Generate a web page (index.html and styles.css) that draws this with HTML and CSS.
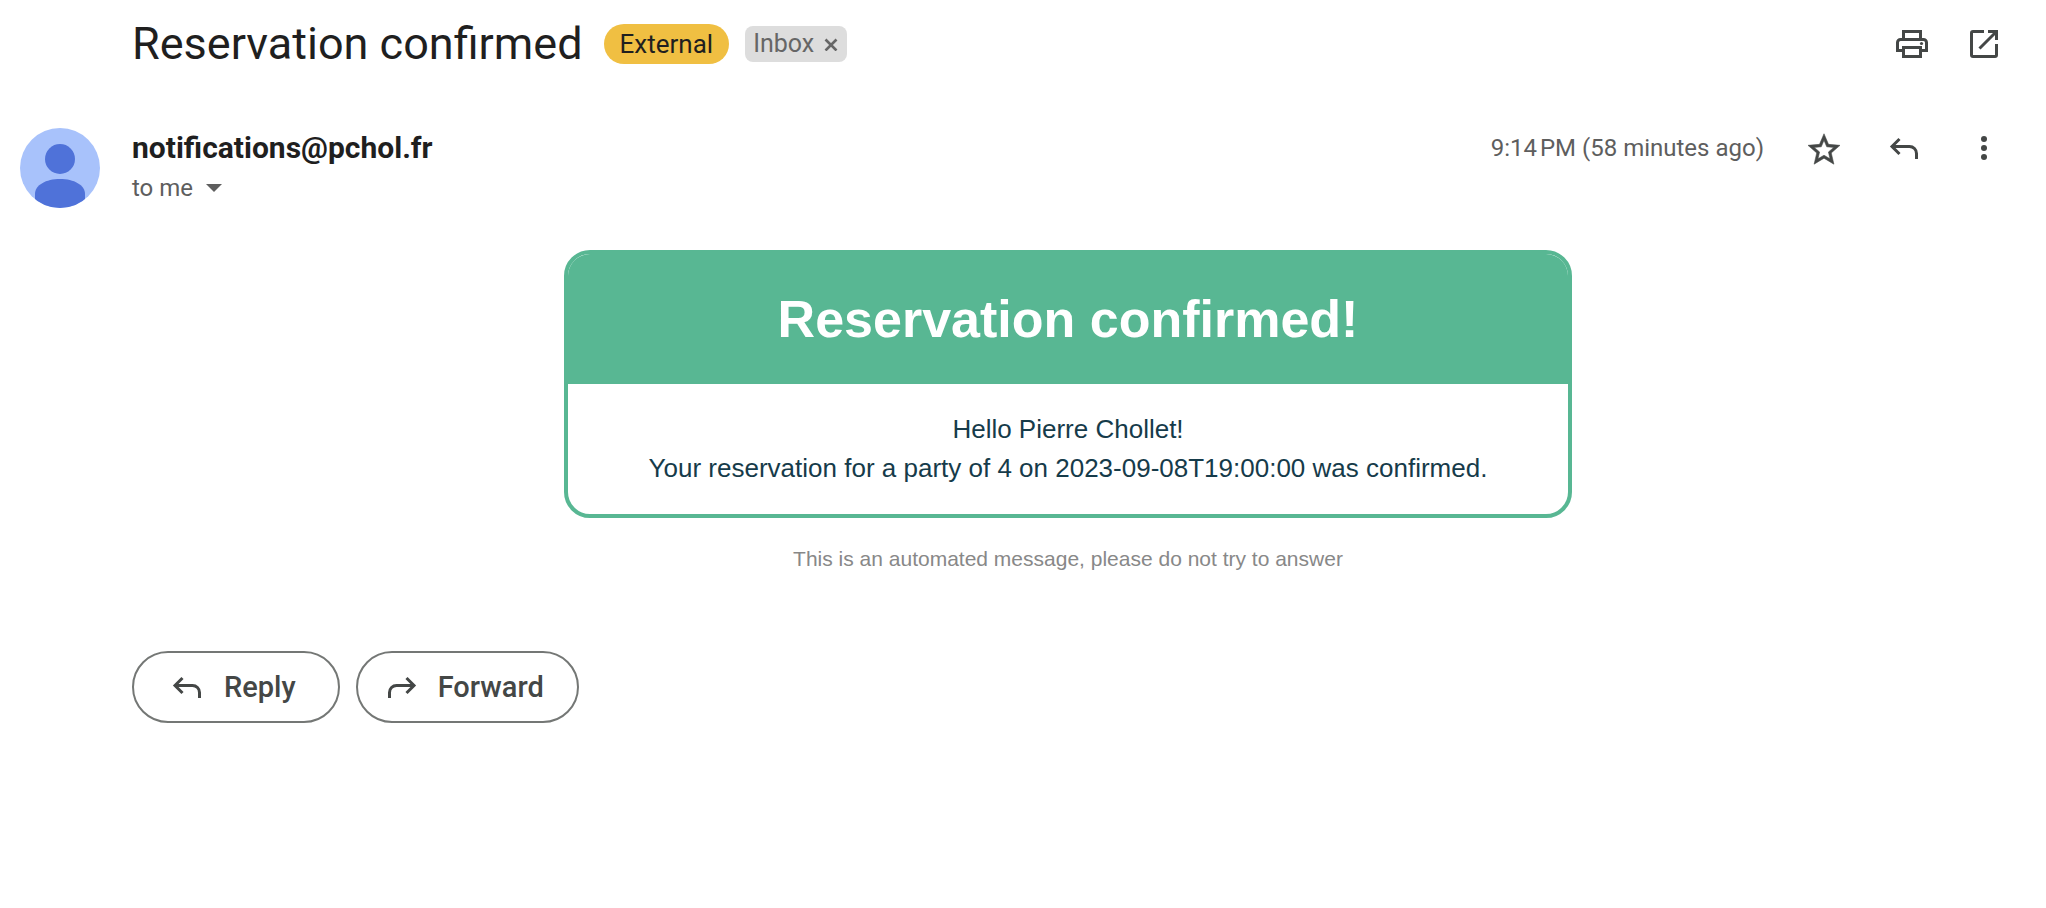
FILE: index.html
```html
<!DOCTYPE html>
<html lang="en">
<head>
<meta charset="utf-8">
<meta name="viewport" content="width=device-width, initial-scale=1">
<title>Reservation confirmed</title>
<link rel="stylesheet" href="styles.css">
</head>
<body>
<main class="mail">
  <header class="subject-row">
    <h1 class="subject">Reservation confirmed</h1>
    <span class="badge-external">External</span>
    <span class="label-inbox">Inbox
      <button class="label-remove" type="button" aria-label="Remove label Inbox">
        <svg width="14" height="14" viewBox="0 0 14 14"><path d="M1.500 2.500l11 11M12.500 2.500l-11 11" fill="none" stroke="currentColor" stroke-width="2.600"/></svg>
      </button>
    </span>
    <div class="subject-actions">
      <button class="icon-button" type="button" aria-label="Print all">
        <svg width="40" height="40" viewBox="0 0 40 40" fill="none" stroke="currentColor" stroke-width="3"><path d="M11.500 15V7.500h17V15M11.500 26.500h-6V18.500a3 3 0 0 1 3-3h23a3 3 0 0 1 3 3v8h-6"/><path d="M11.500 23.500h17v9h-17z"/><circle cx="29.500" cy="19.500" r="1.600" fill="currentColor" stroke="none"/></svg>
      </button>
      <button class="icon-button" type="button" aria-label="In new window">
        <svg width="40" height="40" viewBox="0 0 40 40" fill="none" stroke="currentColor" stroke-width="3"><path d="M20 7.500H9a1.500 1.500 0 0 0-1.500 1.500v22a1.500 1.500 0 0 0 1.500 1.500h22a1.500 1.500 0 0 0 1.500-1.500V20M24 7.500h8.500V16M32 8L15.500 24.500"/></svg>
      </button>
    </div>
  </header>

  <section class="sender-row">
    <svg class="avatar" viewBox="0 0 80 80" role="img" aria-label="Sender">
      <defs><clipPath id="disc"><circle cx="40" cy="40" r="40"/></clipPath></defs>
      <g clip-path="url(#disc)"><rect width="80" height="80" fill="#a8c2fb"/><circle cx="40" cy="31" r="15" fill="#4f72d9"/><path d="M15 80V66c0-9 11-15 25-15s25 6 25 15v14z" fill="#4f72d9"/></g>
    </svg>
    <div class="sender">
      <h2 class="sender-name">notifications@pchol.fr</h2>
      <button class="recipient" type="button">to me
        <svg width="16" height="8" viewBox="0 0 16 8"><path d="M0 0h16L8 8z" fill="currentColor"/></svg>
      </button>
    </div>
    <div class="sender-actions">
      <time class="sent-at">9:14&#8239;PM (58 minutes ago)</time>
      <button class="icon-button" type="button" aria-label="Star">
        <svg width="40" height="40" viewBox="0 0 40 40"><path fill="currentColor" stroke="currentColor" stroke-width=".350" transform="scale(1.6) translate(.5 1.6)" d="M22 9.240l-7.190-.620L12 2 9.190 8.630 2 9.240l5.460 4.730L5.820 21 12 17.270 18.180 21l-1.630-7.030L22 9.240zM12 15.400l-3.760 2.270 1-4.280-3.320-2.880 4.380-.380L12 6.100l1.710 4.040 4.380.380-3.320 2.880 1 4.280L12 15.400z"/></svg>
      </button>
      <button class="icon-button" type="button" aria-label="Reply">
        <svg width="40" height="40" viewBox="0 0 40 40"><path fill="none" stroke="currentColor" stroke-width="3" d="M15.500 11L8 18.500l7.500 7.500M8 18.500h17.500a7 7 0 0 1 7 7V31"/></svg>
      </button>
      <button class="icon-button" type="button" aria-label="More">
        <svg width="40" height="40" viewBox="0 0 40 40" fill="currentColor"><circle cx="20" cy="11" r="3"/><circle cx="20" cy="20" r="3"/><circle cx="20" cy="29" r="3"/></svg>
      </button>
    </div>
  </section>

  <article class="message">
    <div class="card">
      <h3 class="card-title">Reservation confirmed!</h3>
      <p class="card-body">Hello Pierre Chollet!<br>Your reservation for a party of 4 on 2023-09-08T19:00:00 was confirmed.</p>
    </div>
    <p class="note">This is an automated message, please do not try to answer</p>
  </article>

  <footer class="reply-row">
    <button class="pill-button" type="button">
      <svg width="32" height="32" viewBox="0 0 32 32"><path fill="none" stroke="currentColor" stroke-width="3" d="M10.500 7L3 14.500l7.500 7.500M3 14.500h17.500a7 7 0 0 1 7 7V27"/></svg>
      Reply
    </button>
    <button class="pill-button pill-forward" type="button">
      <svg width="32" height="32" viewBox="0 0 32 32"><path fill="none" stroke="currentColor" stroke-width="3" d="M20.500 7L28 14.500l-7.500 7.500M28 14.500H10.500a7 7 0 0 0-7 7V27"/></svg>
      Forward
    </button>
  </footer>
</main>
</body>
</html>
```
FILE: styles.css
```css
* {
  box-sizing: border-box;
}

body {
  margin: 0;
  background: #fff;
  color: #1f1f1f;
  font-family: Roboto, "Open Sans", sans-serif;
}

h1, h2, h3, p {
  margin: 0;
}

button {
  padding: 0;
  border: 0;
  background: none;
  color: inherit;
  font: inherit;
  cursor: pointer;
}

svg {
  display: block;
  flex: none;
}

.mail {
  padding: 16px 42px 40px 132px;
}

.subject-row {
  display: flex;
  align-items: center;
  min-height: 56px;
}

.subject {
  margin-right: 21px;
  font-size: 45px;
  font-weight: 400;
  line-height: 56px;
}

.badge-external {
  margin-right: 16px;
  padding: 0 16px;
  border-radius: 20px;
  background: #f0bf42;
  font-size: 26px;
  line-height: 40px;
}

.label-inbox {
  display: flex;
  align-items: center;
  gap: 10px;
  padding: 0 9px 0 8px;
  border-radius: 8px;
  background: #ddd;
  color: #666;
  font-size: 25px;
  line-height: 36px;
}

.subject-actions {
  display: flex;
  gap: 32px;
  margin-left: auto;
}

.icon-button {
  color: #444746;
}

.sender-row {
  display: flex;
  align-items: flex-start;
  margin: 56px 0 42px -112px;
}

.avatar {
  width: 80px;
  height: 80px;
  margin-right: 32px;
}

.sender-name {
  font-size: 30px;
  font-weight: 700;
  line-height: 40px;
}

.recipient {
  display: flex;
  align-items: center;
  gap: 13px;
  color: #5e5e5e;
  font-size: 24px;
  line-height: 40px;
}

.sender-actions {
  display: flex;
  align-items: center;
  gap: 40px;
  margin-left: auto;
  color: #5e5e5e;
  font-size: 24px;
}

.message {
  font-family: "Liberation Sans", Arial, sans-serif;
  text-align: center;
}

.card {
  max-width: 1008px;
  margin: 0 auto;
  overflow: hidden;
  border: 4px solid #58b793;
  border-radius: 26px;
}

.card-title {
  padding: 26px;
  background: #58b793;
  color: #fff;
  font-size: 52px;
  line-height: 78px;
}

.card-body {
  padding: 26px;
  color: #163b4a;
  font-size: 26px;
  line-height: 39px;
}

.note {
  margin-top: 25px;
  color: #888;
  font-size: 21px;
  line-height: 31px;
}

.reply-row {
  display: flex;
  gap: 16px;
  margin-top: 77px;
}

.pill-button {
  display: flex;
  align-items: center;
  gap: 20px;
  height: 72px;
  padding: 0 42px 0 38px;
  border: 2px solid #747775;
  border-radius: 36px;
  color: #444746;
  font-size: 29px;
  font-weight: 500;
}

.pill-forward {
  padding: 0 33px 0 28px;
}
```
